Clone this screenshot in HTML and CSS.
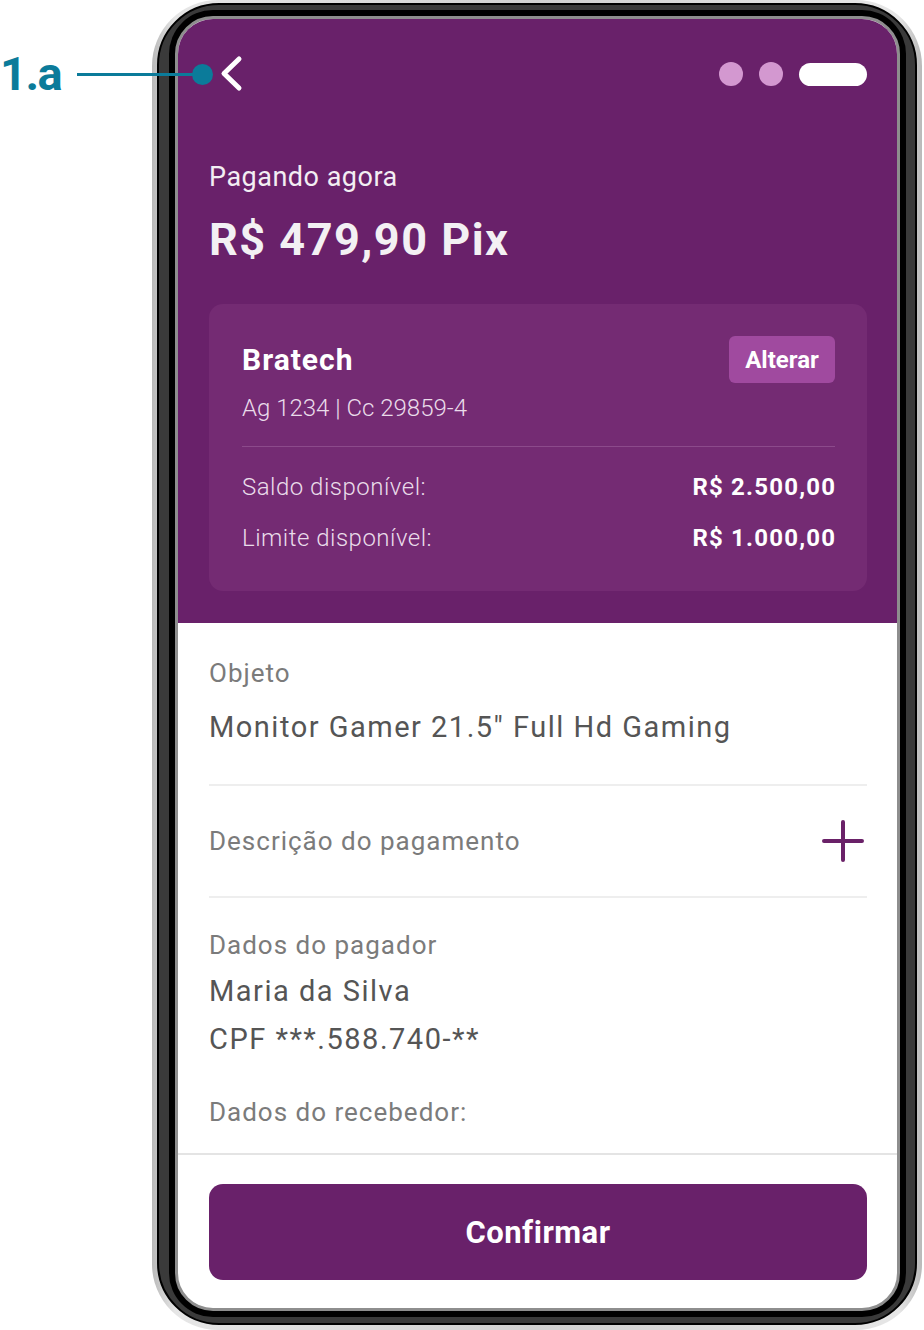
FILE: index.html
```html
<!DOCTYPE html>
<html lang="pt-BR">
<head>
  <meta charset="UTF-8">
  <meta name="viewport" content="width=device-width, initial-scale=1.0">
  <title>Pagamento Pix</title>
  <link rel="stylesheet" href="styles.css">
</head>
<body>

  <div class="stage">
    <!-- Annotation pointing at the back button -->
    <div class="callout">
      <span class="callout-label">1.a</span>
      <span class="callout-line"></span>
      <span class="callout-dot"></span>
    </div>

    <div class="phone">
      <div class="bezel">
        <div class="screen">

          <header class="pay-header">
            <div class="nav">
              <svg class="back" width="24" height="40" viewBox="0 0 24 40">
                <polyline points="20,5 5,19.5 20,34" fill="none" stroke="#fff" stroke-width="5" stroke-linecap="round" stroke-linejoin="round"/>
              </svg>
              <div class="steps">
                <span class="step"></span>
                <span class="step"></span>
                <span class="step current"></span>
              </div>
            </div>

            <p class="paying-label">Pagando agora</p>
            <h1 class="amount">R$ 479,90 Pix</h1>

            <div class="account-card">
              <div class="account-top">
                <span class="bank">Bratech</span>
                <button class="change-btn">Alterar</button>
              </div>
              <p class="account-no">Ag 1234 | Cc 29859-4</p>
              <div class="account-line"></div>
              <div class="balance-row">
                <span>Saldo disponível:</span>
                <strong>R$ 2.500,00</strong>
              </div>
              <div class="balance-row second">
                <span>Limite disponível:</span>
                <strong>R$ 1.000,00</strong>
              </div>
            </div>
          </header>

          <section class="details">
            <p class="label">Objeto</p>
            <p class="value item-name">Monitor Gamer 21.5" Full Hd Gaming</p>
            <div class="divider"></div>

            <div class="desc-row">
              <span class="label">Descrição do pagamento</span>
              <svg class="plus" width="44" height="44" viewBox="0 0 44 44">
                <path d="M22 3 V41 M3 22 H41" stroke="#6a2168" stroke-width="4" stroke-linecap="round" fill="none"/>
              </svg>
            </div>
            <div class="divider"></div>

            <p class="label payer-label">Dados do pagador</p>
            <p class="value payer-name">Maria da Silva</p>
            <p class="value payer-cpf">CPF ***.588.740-**</p>

            <p class="label receiver-label">Dados do recebedor:</p>
          </section>

          <footer class="pay-footer">
            <button class="confirm-btn">Confirmar</button>
          </footer>

        </div>
      </div>
    </div>
  </div>

</body>
</html>
```

FILE: styles.css
```css
body {
  margin: 0;
  background-color: #fff;
  font-family: Roboto, "Noto Sans", Arial, sans-serif;
}
p, h1 {
  margin: 0;
}
button {
  font-family: inherit;
  border: none;
  cursor: pointer;
}

.stage {
  position: relative;
  width: 924px;
  height: 1330px;
  overflow: hidden;
}

/* annotation */
.callout {
  position: absolute;
  left: 0;
  top: 50px;
  height: 48px;
  display: flex;
  align-items: center;
  z-index: 2;
}
.callout-label {
  font-size: 47px;
  font-weight: 700;
  color: #0b7b9a;
  letter-spacing: -1.5px;
  line-height: 48px;
}
.callout-line {
  width: 122px;
  height: 3px;
  margin-left: 16px;
  background-color: #0b7b9a;
}
.callout-dot {
  width: 21px;
  height: 21px;
  border-radius: 50%;
  background-color: #0b7b9a;
  margin-left: -7px;
}

/* phone mockup */
.phone {
  margin-left: 152px;
  width: 770px;
  height: 1330px;
  box-sizing: border-box;
  padding: 3px 5px 5px 5px;
  border-radius: 66px;
  background: linear-gradient(90deg, #b9b9b9, #e6e6e6 3%, #d0d0d0 50%, #e6e6e6 97%, #b9b9b9);
}
.bezel {
  height: 100%;
  box-sizing: border-box;
  padding: 11px 15px 12px 16px;
  border: 2px solid #000;
  border-radius: 62px;
  background-color: #3a3a3a;
}
.screen {
  height: 100%;
  box-sizing: border-box;
  border: 3px solid #8e8e8e;
  border-radius: 38px;
  box-shadow: 0 0 0 6px #000;
  overflow: hidden;
  background-color: #fff;
  display: flex;
  flex-direction: column;
}

/* purple header */
.pay-header {
  background-color: #69216a;
  padding: 35px 30px 32px 31px;
  color: #fff;
}
.nav {
  height: 40px;
  display: flex;
  align-items: center;
  justify-content: space-between;
  padding-left: 10px;
}
.back {
  display: block;
}
.steps {
  display: flex;
  align-items: center;
  gap: 16px;
}
.step {
  width: 24px;
  height: 24px;
  border-radius: 50%;
  background-color: #d398d0;
}
.step.current {
  width: 68px;
  height: 23px;
  border-radius: 12px;
  background-color: #fff;
}
.paying-label {
  margin-top: 66px;
  font-size: 27px;
  line-height: 34px;
  letter-spacing: 0.5px;
  color: #f3eef3;
}
.amount {
  margin-top: 19px;
  font-size: 45px;
  line-height: 54px;
  font-weight: 700;
  letter-spacing: 1.5px;
  color: #f3f0f3;
}

.account-card {
  margin-top: 37px;
  padding: 32px 32px 39px 33px;
  border-radius: 14px;
  background-color: #742b73;
}
.account-top {
  height: 47px;
  display: flex;
  align-items: center;
  justify-content: space-between;
}
.bank {
  font-size: 30px;
  font-weight: 700;
  letter-spacing: 1px;
}
.change-btn {
  width: 106px;
  height: 47px;
  border-radius: 6px;
  background-color: #a04a9f;
  color: #fff;
  font-size: 24px;
  font-weight: 700;
}
.account-no {
  margin-top: 11px;
  font-size: 24px;
  line-height: 28px;
  font-weight: 300;
  color: #eadcea;
}
.account-line {
  margin-top: 24px;
  height: 1px;
  background-color: #8c4a8b;
}
.balance-row {
  margin-top: 26px;
  display: flex;
  justify-content: space-between;
  font-size: 24px;
  line-height: 28px;
}
.balance-row.second {
  margin-top: 23px;
}
.balance-row span {
  font-weight: 300;
  letter-spacing: 0.5px;
  color: #eadcea;
}
.balance-row strong {
  font-weight: 700;
  letter-spacing: 1.2px;
  margin-right: -1.2px;
  color: #fff;
}

/* white details area */
.details {
  flex: 1;
  overflow: hidden;
  padding: 0 30px 0 31px;
}
.label {
  font-size: 26px;
  line-height: 30px;
  letter-spacing: 1px;
  color: #7b7b7b;
}
.value {
  font-size: 29px;
  line-height: 36px;
  letter-spacing: 1.5px;
  color: #555;
}
.details > .label:first-child {
  margin-top: 35px;
}
.item-name {
  margin-top: 21px;
}
.divider {
  height: 2px;
  background-color: #eeeeee;
}
.item-name + .divider {
  margin-top: 39px;
}
.desc-row {
  height: 110px;
  display: flex;
  align-items: center;
  justify-content: space-between;
}
.plus {
  display: block;
  margin-right: 2px;
}
.payer-label {
  margin-top: 32px;
}
.payer-name {
  margin-top: 13px;
}
.payer-cpf {
  margin-top: 12px;
}
.receiver-label {
  margin-top: 40px;
}

/* bottom bar */
.pay-footer {
  border-top: 2px solid #e4e4e4;
  padding: 29px 30px 28px 31px;
}
.confirm-btn {
  width: 100%;
  height: 96px;
  border-radius: 14px;
  background-color: #69216a;
  color: #fff;
  font-size: 31px;
  font-weight: 700;
  letter-spacing: 0.5px;
}
```
